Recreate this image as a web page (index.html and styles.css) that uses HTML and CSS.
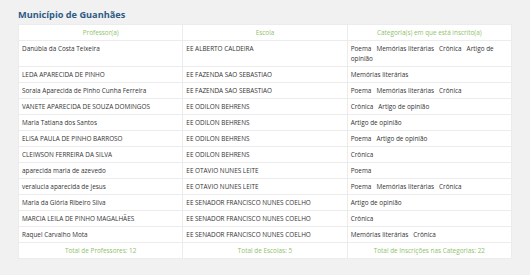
FILE: index.html
```html
<!DOCTYPE html>
<html lang="pt-BR">
<head>
<meta charset="utf-8">
<title>Município de Guanhães</title>
<link rel="stylesheet" href="styles.css">
</head>
<body>
<div class="page">
  <h2 class="title">Município de Guanhães</h2>
  <table class="grid">
    <thead>
      <tr><th>Professor(a)</th><th>Escola</th><th>Categoria(s) em que está inscrito(a)</th></tr>
    </thead>
    <tbody>
      <tr><td>Danúbia da Costa Teixeira</td><td>EE ALBERTO CALDEIRA</td><td class="cats">Poema   Memórias literárias   Crônica   Artigo de opinião</td></tr>
      <tr><td>LEDA APARECIDA DE PINHO</td><td>EE FAZENDA SAO SEBASTIAO</td><td class="cats">Memórias literárias</td></tr>
      <tr><td>Soraia Aparecida de Pinho Cunha Ferreira</td><td>EE FAZENDA SAO SEBASTIAO</td><td class="cats">Poema   Memórias literárias   Crônica</td></tr>
      <tr><td>VANETE APARECIDA DE SOUZA DOMINGOS</td><td>EE ODILON BEHRENS</td><td class="cats">Crônica   Artigo de opinião</td></tr>
      <tr><td>Maria Tatiana dos Santos</td><td>EE ODILON BEHRENS</td><td class="cats">Artigo de opinião</td></tr>
      <tr><td>ELISA PAULA DE PINHO BARROSO</td><td>EE ODILON BEHRENS</td><td class="cats">Poema   Artigo de opinião</td></tr>
      <tr><td>CLEIWSON FERREIRA DA SILVA</td><td>EE ODILON BEHRENS</td><td class="cats">Crônica</td></tr>
      <tr><td>aparecida maria de azevedo</td><td>EE OTAVIO NUNES LEITE</td><td class="cats">Poema</td></tr>
      <tr><td>veralucia aparecida de jesus</td><td>EE OTAVIO NUNES LEITE</td><td class="cats">Poema   Memórias literárias   Crônica</td></tr>
      <tr><td>Maria da Glória Ribeiro Silva</td><td>EE SENADOR FRANCISCO NUNES COELHO</td><td class="cats">Artigo de opinião</td></tr>
      <tr><td>MARCIA LEILA DE PINHO MAGALHÃES</td><td>EE SENADOR FRANCISCO NUNES COELHO</td><td class="cats">Crônica</td></tr>
      <tr><td>Raquel Carvalho Mota</td><td>EE SENADOR FRANCISCO NUNES COELHO</td><td class="cats">Memórias literárias   Crônica</td></tr>
    </tbody>
    <tfoot>
      <tr><td>Total de Professores: 12</td><td>Total de Escolas: 5</td><td>Total de Inscrições nas Categorias: 22</td></tr>
    </tfoot>
  </table>
</div>
</body>
</html>
```
FILE: styles.css
```css
html, body {
  margin: 0;
  padding: 0;
  background: #f1f1f1;
}
.page {
  padding: 8px 0 0 18px;
  font-family: "Open Sans", "Noto Sans", sans-serif;
}
.title {
  margin: 0 0 2px;
  font-size: 9.2px;
  line-height: 14px;
  font-weight: 700;
  color: #2d5b86;
}
.grid {
  width: 494px;
  table-layout: fixed;
  border-collapse: collapse;
  background: #ffffff;
  font-size: 6.4px;
  line-height: 10px;
  color: #333333;
}
.grid th, .grid td {
  border: 1px solid #ececec;
  padding: 3px 3px 2px;
  vertical-align: top;
  text-align: left;
}
.grid th {
  font-weight: 400;
  color: #8fbf6c;
  text-align: center;
}
.grid tfoot td {
  color: #8fbf6c;
  text-align: center;
}
.cats {
  white-space: pre-wrap;
}
```
